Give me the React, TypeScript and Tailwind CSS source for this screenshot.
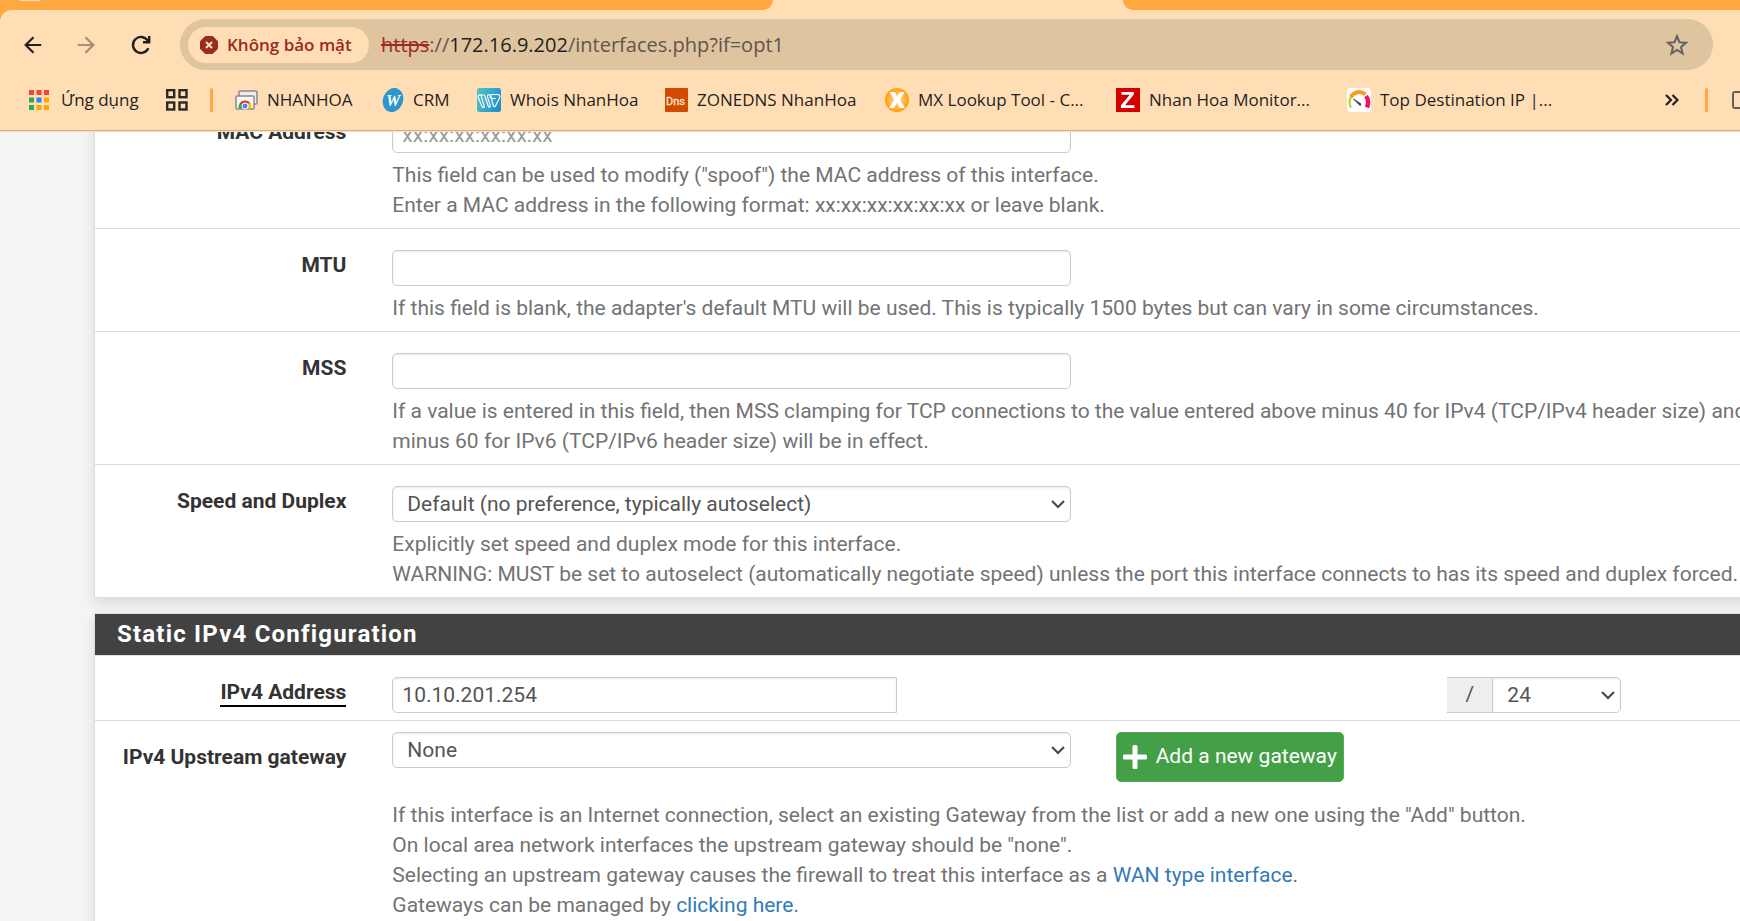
import React from "react";

const ROBOTO = "font-[Roboto,'Liberation_Sans',sans-serif]";
const CHROME = "font-['Open_Sans','Noto_Sans',sans-serif]";

const control =
  "h-9 w-full rounded-[5px] border border-[#ccc] bg-white text-[21px] leading-[30px] text-[#555] shadow-[inset_0_1px_2px_rgba(0,0,0,0.09)] outline-none";

function BackIcon({ className }: { className: string }) {
  return (
    <svg viewBox="0 0 24 24" className={className} fill="none" stroke="currentColor" strokeWidth="2.4" aria-hidden="true">
      <path d="M21 12H4.5M12.5 3.5L4 12l8.500 8.500" />
    </svg>
  );
}

function ReloadIcon() {
  return (
    <svg viewBox="0 0 24 24" className="size-6" fill="none" stroke="currentColor" strokeWidth="2.4" aria-hidden="true">
      <path d="M19.300 15.200A8 8 0 1 1 18.600 7.400L20 9" />
      <path d="M20.200 3v6.200H14" />
    </svg>
  );
}

function StopIcon() {
  return (
    <svg viewBox="0 0 18 18" className="size-[18px] shrink-0" aria-hidden="true">
      <path d="M5.300 0h7.400L18 5.300v7.400L12.700 18H5.300L0 12.700V5.300z" fill="#9a2a24" />
      <path d="M6 6l6 6M12 6l-6 6" stroke="#ffdeb5" strokeWidth="2" />
    </svg>
  );
}

function AppsIcon() {
  const colors = ["#f44336", "#f44336", "#f44336", "#34a853", "#1e88f5", "#f9a80a", "#34a853", "#f9a80a", "#f9a80a"];
  return (
    <svg viewBox="0 0 20 20" className="size-5 shrink-0" aria-hidden="true">
      {colors.map((c, i) => (
        <rect key={i} x={(i % 3) * 7.5} y={Math.floor(i / 3) * 7.5} width="5" height="5" fill={c} />
      ))}
    </svg>
  );
}

function TabGridIcon() {
  return (
    <svg viewBox="0 0 22 22" className="size-[22px]" fill="none" stroke="#2a2826" strokeWidth="2.4" aria-hidden="true">
      <rect x="1.200" y="1.200" width="7" height="7" />
      <rect x="13.500" y="1.200" width="7" height="7" />
      <rect x="1.200" y="13.500" width="7" height="7" />
      <rect x="13.500" y="13.500" width="7" height="7" />
    </svg>
  );
}

function FoldersIcon() {
  return (
    <svg viewBox="0 0 23 22" className="h-[22px] w-[23px]" aria-hidden="true">
      <rect x="4" y="2" width="18" height="13" rx="1" fill="#ececec" stroke="#8a8a8a" strokeWidth="1.500" />
      <rect x="1" y="7" width="18" height="13" rx="1" fill="#f7f7f7" stroke="#8a8a8a" strokeWidth="1.500" />
      <path d="M3.500 19.500a6.500 6.500 0 0 1 3-6.500l3.500 6.500z" fill="#34a853" />
      <path d="M4.300 15a6.500 6.500 0 0 1 11.400 0z" fill="#e33b2e" />
      <path d="M15.500 14.500a6.500 6.500 0 0 1 1 5h-4.500l-1-5z" fill="#fbc116" />
      <circle cx="10" cy="17" r="3" fill="#4285f4" stroke="#fff" strokeWidth="1" />
    </svg>
  );
}

function CrmIcon() {
  return (
    <svg viewBox="0 0 22 24" className="h-6 w-[22px]" aria-hidden="true">
      <ellipse cx="11" cy="12" rx="10" ry="12.300" transform="rotate(20 11 12)" fill="#2f95cf" />
      <text x="11" y="17.500" textAnchor="middle" fontSize="16" fontWeight="700" fontStyle="italic" fill="#fff" fontFamily="Liberation Serif, serif">
        W
      </text>
    </svg>
  );
}

function WhoisIcon() {
  return (
    <svg viewBox="0 0 24 24" className="size-6" aria-hidden="true">
      <defs>
        <linearGradient id="whois" x1="0" x2="1" y1="0.300" y2="0.700">
          <stop offset="0" stopColor="#52bfc6" />
          <stop offset="1" stopColor="#2090cc" />
        </linearGradient>
      </defs>
      <rect width="24" height="24" rx="2.500" fill="url(#whois)" />
      <path
        d="M4.500 7.500c-2-1.500-4 0-3.300 2L4.800 18c.7 2 2.600 2 2.500 0L4.500 9c-.6-2.500 2.500-3 3.300-1l3.400 10c.6 1.800 2.400 1.300 2-.5L10.500 9c-.6-2.500 2.500-3 3.300-1l2.500 9.500c.5 1.500 1.800 1.500 2.400 0l3.800-7.500c1-2-.2-3.500-2-3.500h-5.500c-2.500 0-2.500 4 .5 4h3.500"
        fill="none"
        stroke="#fff"
        strokeWidth="1.100"
      />
    </svg>
  );
}

function DnsIcon() {
  return (
    <svg viewBox="0 0 23 24" className="h-6 w-[23px]" aria-hidden="true">
      <rect width="23" height="24" rx="1" fill="#d24a00" />
      <text x="10.500" y="17" textAnchor="middle" fontSize="11" fill="#ffe9dc" stroke="#ffe9dc" strokeWidth="0.300" fontFamily="Roboto, sans-serif">
        Dns
      </text>
    </svg>
  );
}

function MxIcon() {
  return (
    <svg viewBox="0 0 24 24" className="size-6" aria-hidden="true">
      <defs>
        <radialGradient id="mx">
          <stop offset="0" stopColor="#ffe0a0" />
          <stop offset="1" stopColor="#ff9d0a" />
        </radialGradient>
      </defs>
      <circle cx="12" cy="12" r="12" fill="url(#mx)" />
      <path d="M4.500 4h5.200l2.500 4.600L14.700 4h5L15 11.700l5 8.300h-5.300l-2.800-5.200L9 20H4l5.200-8.300z" fill="#fff" />
    </svg>
  );
}

function ZabbixIcon() {
  return (
    <svg viewBox="0 0 24 24" className="size-6" aria-hidden="true">
      <rect width="24" height="24" fill="#d40000" />
      <path d="M5.500 4h12.300v2.600L9 17.300h9.300V20H5v-2.700L13.800 6.700H5.500z" fill="#fff" />
    </svg>
  );
}

function GaugeIcon() {
  return (
    <svg viewBox="0 0 24 24" className="size-6" aria-hidden="true">
      <rect width="24" height="24" rx="4" fill="#fff" />
      <path d="M4 19.500A10 10 0 0 1 4.500 8.500" fill="none" stroke="#b5d334" strokeWidth="2.200" />
      <path d="M3.800 9A9.500 9.500 0 0 1 18.500 6.500" fill="none" stroke="#f99d1c" strokeWidth="4" />
      <path d="M19 8c2.300 3 2.600 7.500 1 11.500" fill="none" stroke="#f0136b" strokeWidth="4.500" />
      <path d="M6.500 11l7.500 5-.8 1.600z" fill="#1d3461" stroke="#1d3461" strokeWidth="0.800" />
    </svg>
  );
}

function Separator() {
  return <span className="h-6 w-[3px] shrink-0 rounded-sm bg-[#ffa940]" />;
}

type BookmarkProps = { icon: React.ReactNode; label: string; width: string };

function Bookmark({ icon, label, width }: BookmarkProps) {
  return (
    <a href="#" className={`flex shrink-0 items-center gap-[9px] ${width}`}>
      <span className="shrink-0">{icon}</span>
      <span className="whitespace-nowrap">{label}</span>
    </a>
  );
}

function Browser() {
  return (
    <header className={`shrink-0 bg-[#ffa940] text-[#1f1f1f] ${CHROME}`}>
      <div className="flex h-[10px] overflow-hidden bg-[linear-gradient(to_right,#ffa940_30%,#ffdeb5_30%,#ffdeb5_80%,#ffa940_80%)]">
        <div className="flex w-[773px] items-start rounded-br-[14px] bg-[#ffa940] pl-5">
          <span className="h-px w-5 bg-[#ffdeb5]" />
        </div>
        <div className="w-[350px]" />
        <div className="flex-1 rounded-bl-[14px] bg-[#ffa940]" />
      </div>
      <div className="rounded-tl-[12px] bg-[#ffdeb5] pb-px">
        <div className="flex items-center pt-[9px] pr-[27px] pl-[22px]">
          <button type="button" aria-label="Back" className="w-[53px]">
            <BackIcon className="size-[22px]" />
          </button>
          <button type="button" aria-label="Forward" className="w-[54px] text-[#a58e74]">
            <BackIcon className="size-[22px] rotate-180" />
          </button>
          <button type="button" aria-label="Reload" className="w-[51px]">
            <ReloadIcon />
          </button>
          <div className="flex h-[51px] flex-1 items-center rounded-full bg-[#dfc4a0] pr-6 pl-2">
            <button
              type="button"
              className="flex h-9 w-[181px] items-center gap-[9px] rounded-full bg-[#ffdeb5] pl-3 text-[17px] font-semibold whitespace-nowrap text-[#9a2a24]"
            >
              <StopIcon />
              Không bảo mật
            </button>
            <div className="ml-3 flex-1 text-[20px] whitespace-nowrap text-[#5f564b]">
              <span className="text-[#9a2a24] line-through">https</span>://
              <span className="text-[#1f1f1f]">172.16.9.202</span>/interfaces.php?if=opt1
            </div>
            <button type="button" aria-label="Bookmark this tab">
              <svg viewBox="0 0 24 24" className="size-6" fill="none" stroke="#63615f" strokeWidth="2" aria-hidden="true">
                <path d="M12 3.200l2.500 6.100 6.500.5-5 4.200 1.600 6.500L12 17l-5.600 3.500L8 14 3 9.800l6.500-.5z" />
              </svg>
            </button>
          </div>
        </div>
        <nav aria-label="Bookmarks" className="flex h-[61px] items-center overflow-hidden border-b border-[#cdb08c] pl-[29px] text-[17px]">
          <a href="#" className="flex w-[137px] shrink-0 items-center gap-3 whitespace-nowrap">
            <AppsIcon />
            Ứng dụng
          </a>
          <button type="button" aria-label="Tab groups" className="mr-[22px] shrink-0">
            <TabGridIcon />
          </button>
          <Separator />
          <div className="ml-[22px] flex flex-1">
            <Bookmark icon={<FoldersIcon />} label="NHANHOA" width="w-[147px]" />
            <Bookmark icon={<CrmIcon />} label="CRM" width="w-[95px]" />
            <Bookmark icon={<WhoisIcon />} label="Whois NhanHoa" width="w-[188px]" />
            <Bookmark icon={<DnsIcon />} label="ZONEDNS NhanHoa" width="w-[220px]" />
            <Bookmark icon={<MxIcon />} label="MX Lookup Tool - C..." width="w-[231px]" />
            <Bookmark icon={<ZabbixIcon />} label="Nhan Hoa Monitor..." width="w-[231px]" />
            <Bookmark icon={<GaugeIcon />} label="Top Destination IP |..." width="w-[231px]" />
          </div>
          <button type="button" aria-label="More bookmarks" className="mr-[26px] shrink-0">
            <svg viewBox="0 0 14 12" className="h-3 w-[14px]" fill="none" stroke="#1f1f1f" strokeWidth="2.200" aria-hidden="true">
              <path d="M1 1l5 5-5 5M7.500 1l5 5-5 5" />
            </svg>
          </button>
          <Separator />
          <svg viewBox="0 0 8 18" className="ml-6 h-[18px] w-2 shrink-0" fill="none" stroke="#63615f" strokeWidth="2" aria-hidden="true">
            <path d="M9 1H3Q1 1 1 3v12q0 2 2 2h6" />
          </svg>
        </nav>
      </div>
    </header>
  );
}

type SelectProps = { id: string; value: string; className?: string; label?: string };

function Select({ id, value, className = "", label }: SelectProps) {
  return (
    <div className="grid flex-1 items-center">
      <select id={id} aria-label={label} defaultValue={value} className={`${control} col-start-1 row-start-1 appearance-none pl-[14px] ${className}`}>
        <option>{value}</option>
      </select>
      <svg
        viewBox="0 0 14 9"
        className="pointer-events-none col-start-1 row-start-1 mr-[6px] h-[9px] w-[14px] justify-self-end"
        fill="none"
        stroke="#4a4a4a"
        strokeWidth="2.200"
        aria-hidden="true"
      >
        <path d="M1 1l6 6 6-6" />
      </svg>
    </div>
  );
}

type RowProps = { id: string; label: string; required?: boolean; tight?: boolean; last?: boolean; children: React.ReactNode };

function Row({ id, label, required, tight, last, children }: RowProps) {
  return (
    <div className={last ? "" : "border-b border-[#ddd]"}>
      <div className={`-mx-[15px] grid grid-cols-12 items-start ${required ? "pb-[7px]" : "pb-2"} ${tight ? "pt-[11px]" : "pt-[21px]"}`}>
        <label
          htmlFor={id}
          className={`col-span-2 px-[23px] text-right text-[21px] leading-[30px] font-bold text-[#333] ${tight ? "pt-[10px]" : ""}`}
        >
          <span className={required ? "inline-block border-b-2 border-black leading-[26px]" : ""}>{label}</span>
        </label>
        {children}
      </div>
    </div>
  );
}

function Field({ children }: { children: React.ReactNode }) {
  return <div className="col-span-5 flex pr-[22px] pl-[23px]">{children}</div>;
}

function Help({ children, className = "pt-[7px]" }: { children: React.ReactNode; className?: string }) {
  return <p className={`col-span-10 col-start-3 px-[23px] text-[21px] leading-[30px] text-[#737373] ${className}`}>{children}</p>;
}

const panel = "w-[calc(100%+62px)] border border-[#ddd] bg-white shadow-[0_6px_12px_rgba(0,0,0,0.1)]";

export default function App() {
  return (
    <div className="flex h-screen flex-col overflow-hidden bg-[#f4f4f4]">
      <Browser />
      <main className={`flex-1 overflow-hidden pl-[94px] ${ROBOTO}`}>
        <section className={`${panel} -mt-9 border-t-0`}>
          <Row id="mac" label="MAC Address">
            <Field>
              <input id="mac" type="text" placeholder="xx:xx:xx:xx:xx:xx" className={`${control} px-[9px] placeholder:text-[#999]`} />
            </Field>
            <Help>
              This field can be used to modify ("spoof") the MAC address of this interface.
              <br />
              Enter a MAC address in the following format: xx:xx:xx:xx:xx:xx or leave blank.
            </Help>
          </Row>
          <Row id="mtu" label="MTU">
            <Field>
              <input id="mtu" type="text" className={`${control} px-[9px]`} />
            </Field>
            <Help>
              If this field is blank, the adapter's default MTU will be used. This is typically 1500 bytes but can vary in some circumstances.
            </Help>
          </Row>
          <Row id="mss" label="MSS">
            <Field>
              <input id="mss" type="text" className={`${control} px-[9px]`} />
            </Field>
            <Help>
              If a value is entered in this field, then MSS clamping for TCP connections to the value entered above minus 40 for IPv4 (TCP/IPv4
              header size) and minus 60 for IPv6 (TCP/IPv6 header size) will be in effect.
            </Help>
          </Row>
          <Row id="speed" label="Speed and Duplex" last>
            <Field>
              <Select id="speed" value="Default (no preference, typically autoselect)" />
            </Field>
            <Help>
              Explicitly set speed and duplex mode for this interface.
              <br />
              WARNING: MUST be set to autoselect (automatically negotiate speed) unless the port this interface connects to has its speed and
              duplex forced.
            </Help>
          </Row>
        </section>

        <section className={`${panel} mt-[15px]`}>
          <h2 className="border-b border-[#ddd] bg-[#424242] px-[22px] pt-[5px] pb-[6px] text-[24px] leading-[30px] font-bold tracking-wider text-white">
            Static IPv4 Configuration
          </h2>
          <Row id="ipv4" label="IPv4 Address" required>
            <div className="col-span-10 flex px-[23px]">
              <div className="flex w-[1229px] justify-between">
                <input id="ipv4" type="text" defaultValue="10.10.201.254" className={`${control} max-w-[505px] rounded-r-none px-[9px]`} />
                <div className="flex w-[174px]">
                  <span className="flex h-9 w-[45px] items-center justify-center border-y border-[#ccc] bg-[#eee] text-[21px] text-[#555]">/</span>
                  <Select id="mask" label="Subnet mask" value="24" className="rounded-l-none" />
                </div>
              </div>
            </div>
          </Row>
          <Row id="gateway" label="IPv4 Upstream gateway" tight last>
            <Field>
              <Select id="gateway" value="None" />
            </Field>
            <div className="col-span-5 px-[23px]">
              <button
                type="button"
                className="flex h-[50px] items-center gap-[9px] rounded-[5px] border border-[#4caf50] bg-[#43a047] px-[6px] text-[21px] whitespace-nowrap text-white"
              >
                <svg viewBox="0 0 24 24" className="size-6" fill="#fff" aria-hidden="true">
                  <rect x="9.500" width="5" height="24" rx="1.500" />
                  <rect y="9.500" width="24" height="5" rx="1.500" />
                </svg>
                Add a new gateway
              </button>
            </div>
            <Help className="pt-[18px]">
              If this interface is an Internet connection, select an existing Gateway from the list or add a new one using the "Add" button.
              <br />
              On local area network interfaces the upstream gateway should be "none".
              <br />
              Selecting an upstream gateway causes the firewall to treat this interface as a{" "}
              <a href="#" className="text-[#337ab7]">
                WAN type interface
              </a>
              .
              <br />
              Gateways can be managed by{" "}
              <a href="#" className="text-[#337ab7]">
                clicking here
              </a>
              .
            </Help>
          </Row>
        </section>
      </main>
    </div>
  );
}
